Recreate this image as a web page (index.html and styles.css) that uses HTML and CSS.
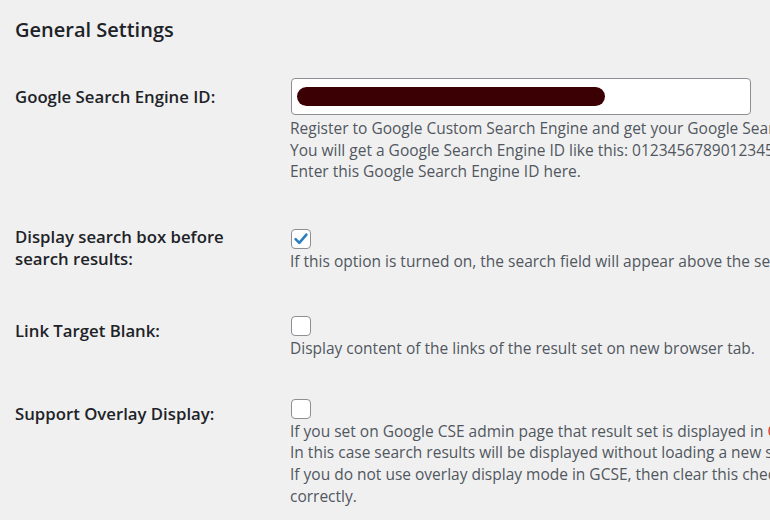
FILE: index.html
```html
<!DOCTYPE html>
<html>
<head>
  <title>General Settings</title>
  <meta name="viewport" content="width=device-width, initial-scale=1.0">
  <link rel="stylesheet" href="styles.css">
</head>
<body>
  <h2 class="title">General Settings</h2>

  <div class="form-table">
    <div class="row row-text">
      <div class="label">Google Search Engine ID:</div>
      <div class="field">
        <div class="text-input"><span class="redacted"></span></div>
        <p class="desc">
          Register to Google Custom Search Engine and get your Google Search Engine ID here: https://cse.google.com/cse/all<br>
          You will get a Google Search Engine ID like this: 012345678901234567890:abcdefghijk<br>
          Enter this Google Search Engine ID here.
        </p>
      </div>
    </div>

    <div class="row row-check row-searchbox">
      <div class="label">Display search box before<br>search results:</div>
      <div class="field">
        <span class="checkbox">
          <svg viewBox="0 0 20 20" width="20" height="20"><path d="M4.6 10.2 L8.3 13.9 L15.4 5.6" fill="none" stroke="#2b7fc0" stroke-width="2.6" stroke-linecap="round" stroke-linejoin="round"/></svg>
        </span>
        <p class="desc">If this option is turned on, the search field will appear above the search results.</p>
      </div>
    </div>

    <div class="row row-check row-link">
      <div class="label">Link Target Blank:</div>
      <div class="field">
        <span class="checkbox"></span>
        <p class="desc">Display content of the links of the result set on new browser tab.</p>
      </div>
    </div>

    <div class="row row-check row-overlay">
      <div class="label">Support Overlay Display:</div>
      <div class="field">
        <span class="checkbox"></span>
        <p class="desc">
          If you set on Google CSE admin page that result set is displayed in <span class="hl">Overlay</span> mode, then check this checkbox.<br>
          In this case search results will be displayed without loading a new search results page.<br>
          If you do not use overlay display mode in GCSE, then clear this checkbox, otherwise the results will not be displayed<br>
          correctly.
        </p>
      </div>
    </div>
  </div>
</body>
</html>
```

FILE: styles.css
```css
html, body {
    background: #f0f0f1;
}

body {
    font-family: "Open Sans", "Noto Sans", sans-serif;
    color: #1d2327;
    margin: 0;
    padding: 0 0 0 15px;
    width: 755px;
    height: 520px;
    overflow: hidden;
}

.title {
    font-size: 20px;
    font-weight: 600;
    line-height: 28px;
    margin: 16px 0 0 0;
}

.row {
    display: grid;
    grid-template-columns: 275px 1fr;
    align-items: start;
}

.label {
    font-size: 16.75px;
    font-weight: 600;
    line-height: 22px;
    white-space: nowrap;
}

.field {
    min-width: 0;
    overflow: hidden;
}

.desc {
    margin: 0;
    font-size: 15.5px;
    line-height: 21.7px;
    color: #50575e;
    white-space: nowrap;
}

.hl {
    color: #d63638;
}

/* text input row */
.row-text {
    margin-top: 34px;
}

.row-text .label {
    padding-top: 8px;
}

.row-text .desc {
    margin-top: 3px;
}

.text-input {
    display: flex;
    align-items: center;
    box-sizing: border-box;
    width: 460px;
    height: 37px;
    margin-left: 1px;
    padding-left: 5px;
    background: #fff;
    border: 1px solid #8c8f94;
    border-radius: 4px;
}

.redacted {
    display: block;
    width: 308px;
    height: 19px;
    border-radius: 10px;
    background: #3a0004;
}

/* checkbox rows */
.row-check .field {
    padding-top: 3px;
}

.row-check .desc {
    margin-top: 2px;
}

.row-searchbox {
    margin-top: 43px;
}

.row-link {
    margin-top: 40px;
}

.row-overlay {
    margin-top: 36px;
}

.row-link .label,
.row-overlay .label {
    padding-top: 7px;
}

.checkbox {
    display: block;
    box-sizing: border-box;
    width: 20px;
    height: 20px;
    margin-left: 1px;
    background: #fff;
    border: 1px solid #8c8f94;
    border-radius: 4px;
    position: relative;
}

.checkbox svg {
    position: absolute;
    left: -1px;
    top: -1px;
}
```
